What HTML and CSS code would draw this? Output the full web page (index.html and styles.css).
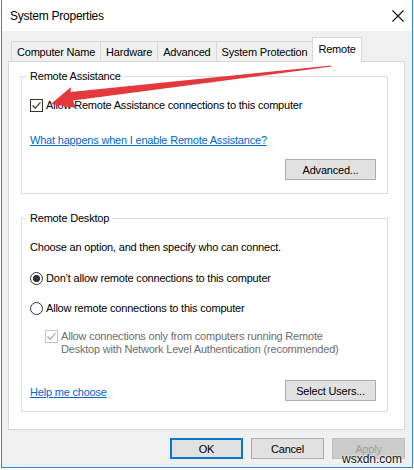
FILE: index.html
```html
<!DOCTYPE html>
<html lang="en">
<head>
    <meta charset="UTF-8">
    <title>System Properties</title>
    <link rel="stylesheet" href="styles.css">
</head>
<body>

<div class="window">
    <div class="titlebar">
        <span class="title">System Properties</span>
        <svg class="close" width="12" height="12" viewBox="0 0 12 12">
            <path d="M0.5 0.5 L11.5 11.5 M11.5 0.5 L0.5 11.5" stroke="#111" stroke-width="1.1" fill="none"/>
        </svg>
    </div>

    <div class="dialog">
        <div class="tabs">
            <div class="tab">Computer Name</div>
            <div class="tab">Hardware</div>
            <div class="tab">Advanced</div>
            <div class="tab">System Protection</div>
            <div class="tab active">Remote</div>
        </div>

        <div class="panel">
            <!-- Remote Assistance -->
            <fieldset class="group group-assist">
                <legend>Remote Assistance</legend>
                <div class="row first">
                    <svg class="box" width="13" height="13" viewBox="0 0 13 13">
                        <rect x="0.5" y="0.5" width="12" height="12" fill="#fff" stroke="#333"/>
                        <path d="M2.5 6.5 L5.2 9.2 L10.5 3.4" fill="none" stroke="#333" stroke-width="1.2"/>
                    </svg>
                    <span>Allow Remote Assistance connections to this computer</span>
                </div>
                <div class="row link-row">
                    <a class="link" href="#">What happens when I enable Remote Assistance?</a>
                </div>
                <div class="row button-row">
                    <button class="btn wide">Advanced...</button>
                </div>
            </fieldset>

            <!-- Remote Desktop -->
            <fieldset class="group group-desktop">
                <legend>Remote Desktop</legend>
                <div class="row first">Choose an option, and then specify who can connect.</div>
                <div class="row radio-row">
                    <span class="radio on"></span>
                    <span>Don’t allow remote connections to this computer</span>
                </div>
                <div class="row radio-row second">
                    <span class="radio"></span>
                    <span>Allow remote connections to this computer</span>
                </div>
                <div class="sub">
                    <svg class="box" width="13" height="13" viewBox="0 0 13 13">
                        <rect x="0.5" y="0.5" width="12" height="12" fill="#fff" stroke="#c4c4c4"/>
                        <path d="M2.5 6.5 L5.2 9.2 L10.5 3.4" fill="none" stroke="#a6a6a6" stroke-width="1.2"/>
                    </svg>
                    <span class="disabled">Allow connections only from computers running Remote<br>Desktop with Network Level Authentication (recommended)</span>
                </div>
                <div class="row bottom-row">
                    <a class="link" href="#">Help me choose</a>
                    <button class="btn wide">Select Users...</button>
                </div>
            </fieldset>
        </div>

        <div class="actions">
            <button class="btn default">OK</button>
            <button class="btn">Cancel</button>
            <button class="btn off">Apply</button>
        </div>
    </div>
</div>

<!-- red annotation arrow drawn over the dialog -->
<svg class="arrow" width="414" height="470" viewBox="0 0 414 470">
    <polygon points="51,104 71,87 70.5,92 331,65.5 331.5,66.5 73,100.5 76,108" fill="#e3383c"/>
</svg>

<div class="watermark">wsxdn.com</div>

</body>
</html>
```

FILE: styles.css
```css
body {
    margin: 0;
    font-family: "Liberation Sans", Arial, sans-serif;
    font-size: 11px;
    letter-spacing: -0.2px;
    color: #000;
    background-color: #fff;
}
.window {
    box-sizing: border-box;
    width: 412px;
    height: 468px;
    margin-left: 1px;
    border: 1px solid #2b87d3;
    border-top: none;
    background-color: #f0f0f0;
    display: flex;
    flex-direction: column;
}
.titlebar {
    height: 31px;
    flex-shrink: 0;
    background-color: #fff;
    display: flex;
    align-items: center;
    justify-content: space-between;
    padding: 0 8px;
}
.title {
    font-size: 12px;
    letter-spacing: -0.25px;
}
.dialog {
    padding: 6px 7px 0 6px;
}
.tabs {
    display: flex;
    align-items: flex-end;
    height: 24px;
    padding-left: 3px;
}
.tab {
    height: 20px;
    box-sizing: border-box;
    padding: 0 5px;
    border: 1px solid #d9d9d9;
    border-bottom: none;
    border-right: none;
    background-color: #f0f0f0;
    display: flex;
    align-items: center;
    white-space: nowrap;
}
.tab.active {
    height: 25px;
    margin-bottom: -1px;
    padding-bottom: 3px;
    border-right: 1px solid #d9d9d9;
    background-color: #fff;
    position: relative;
    z-index: 1;
}
.panel {
    box-sizing: border-box;
    height: 369px;
    background-color: #fff;
    border: 1px solid #d9d9d9;
    padding: 7px 16px 0 12px;
}
.group {
    margin: 0;
    border: 1px solid #dcdcdc;
    padding: 0 11px 13px 8px;
}
.group legend {
    line-height: 14px;
    padding: 0 3px;
    margin-left: -3px;
}
.group-desktop {
    margin-top: 17px;
    padding-bottom: 10px;
}
.row {
    display: flex;
    align-items: center;
    line-height: 16px;
}
.row.first {
    margin-top: 14px;
}
.box {
    flex-shrink: 0;
    margin-right: 3px;
}
.link-row {
    margin-top: 19px;
}
.button-row {
    margin-top: 11px;
    justify-content: flex-end;
}
.link {
    color: #0066cc;
    text-decoration: underline;
}
.radio-row {
    margin-top: 15px;
}
.radio-row.second {
    margin-top: 14px;
}
.radio {
    box-sizing: border-box;
    width: 13px;
    height: 13px;
    margin-right: 3px;
    border: 1px solid #333;
    border-radius: 50%;
    background-color: #fff;
}
.radio.on {
    background: radial-gradient(circle, #333 0 3.3px, #fff 3.9px);
}
.sub {
    display: flex;
    align-items: flex-start;
    margin-top: 14px;
    padding-left: 15px;
    line-height: 13px;
}
.disabled {
    color: #6d6d6d;
}
.bottom-row {
    margin-top: 24px;
    justify-content: space-between;
}
.bottom-row .link {
    padding-top: 2px;
}
.btn {
    box-sizing: border-box;
    width: 73px;
    height: 21px;
    padding: 0;
    font-family: inherit;
    font-size: 11px;
    letter-spacing: -0.2px;
    color: #000;
    background-color: #e1e1e1;
    border: 1px solid #adadad;
}
.btn.wide {
    width: 91px;
}
.btn.default {
    border-color: #0078d7;
    box-shadow: inset 0 0 0 1px #0078d7;
}
.btn.off {
    color: #a0a0a0;
    background-color: #cccccc;
    border-color: #bfbfbf;
}
.actions {
    display: flex;
    justify-content: flex-end;
    gap: 8px;
    margin-top: 8px;
}
.arrow {
    position: absolute;
    top: 0;
    left: 0;
    pointer-events: none;
}
.watermark {
    position: absolute;
    left: 342px;
    top: 452px;
    font-size: 12px;
    letter-spacing: 0;
    color: #111;
    text-shadow: 0 0 2px #fff, 0 0 2px #fff;
}
```
